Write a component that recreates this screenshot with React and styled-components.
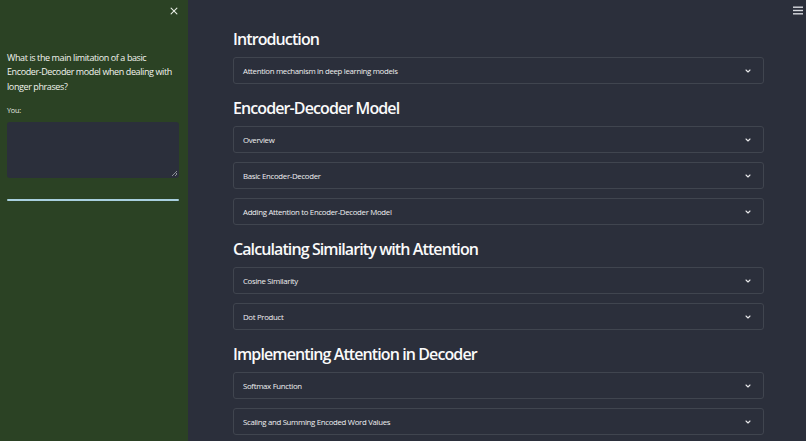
import React from 'react';
import styled, { createGlobalStyle } from 'styled-components';

const GlobalStyle = createGlobalStyle`
  html, body {
    margin: 0;
    padding: 0;
    background: #2b2f3b;
  }
  * {
    box-sizing: border-box;
  }
`;

const sections = [
  { title: 'Introduction', items: ['Attention mechanism in deep learning models'] },
  {
    title: 'Encoder-Decoder Model',
    items: ['Overview', 'Basic Encoder-Decoder', 'Adding Attention to Encoder-Decoder Model'],
  },
  { title: 'Calculating Similarity with Attention', items: ['Cosine Similarity', 'Dot Product'] },
  {
    title: 'Implementing Attention in Decoder',
    items: ['Softmax Function', 'Scaling and Summing Encoded Word Values'],
  },
];

const Chevron = () => (
  <svg width="8" height="8" viewBox="0 0 24 24" fill="none" stroke="#e8e8ea" strokeWidth="3.2" strokeLinecap="round" strokeLinejoin="round">
    <polyline points="6 9 12 15 18 9" />
  </svg>
);

const App = () => (
  <Page>
    <GlobalStyle />
    <Sidebar>
      <CloseBtn>
        <svg width="10" height="10" viewBox="0 0 24 24" fill="none" stroke="#e6ece2" strokeWidth="2.6" strokeLinecap="round">
          <line x1="5" y1="5" x2="19" y2="19" />
          <line x1="19" y1="5" x2="5" y2="19" />
        </svg>
      </CloseBtn>
      <Question>
        What is the main limitation of a basic Encoder-Decoder model when dealing with longer phrases?
      </Question>
      <Label>You:</Label>
      <TextArea />
      <Progress />
    </Sidebar>
    <Main>
      <MenuBtn>
        <svg width="10" height="9" viewBox="0 0 10 9" fill="#d8dadf">
          <rect x="0" y="0.5" width="10" height="1.4" />
          <rect x="0" y="3.8" width="10" height="1.4" />
          <rect x="0" y="7.1" width="10" height="1.4" />
        </svg>
      </MenuBtn>
      <Content>
        {sections.map((s) => (
          <Section key={s.title}>
            <Heading>{s.title}</Heading>
            {s.items.map((item) => (
              <Expander key={item}>
                <span>{item}</span>
                <Chevron />
              </Expander>
            ))}
          </Section>
        ))}
      </Content>
    </Main>
  </Page>
);

const Page = styled.div`
  display: flex;
  width: 806px;
  height: 441px;
  overflow: hidden;
  font-family: 'Open Sans', 'Noto Sans', sans-serif;
  color: #fafafa;
`;

const Sidebar = styled.aside`
  position: relative;
  width: 188px;
  flex-shrink: 0;
  background: #2b4224;
  padding: 51px 9px 0 7px;
  display: flex;
  flex-direction: column;
`;

const CloseBtn = styled.div`
  position: absolute;
  top: 6px;
  left: 169px;
  display: flex;
`;

const Question = styled.p`
  margin: 0;
  font-size: 9px;
  line-height: 14.4px;
  letter-spacing: -0.4px;
  color: #f2f4ef;
`;

const Label = styled.div`
  margin-top: 11px;
  font-size: 7.2px;
  letter-spacing: -0.2px;
  color: #e8ece4;
`;

const TextArea = styled.div`
  margin-top: 7px;
  height: 56px;
  background: #2b2f3b;
  border-radius: 3px;
  position: relative;

  &::after {
    content: '';
    position: absolute;
    right: 2px;
    bottom: 2px;
    width: 5px;
    height: 5px;
    background: linear-gradient(135deg, transparent 45%, #8a8e96 45%, #8a8e96 55%, transparent 55%, transparent 70%, #8a8e96 70%, #8a8e96 80%, transparent 80%);
  }
`;

const Progress = styled.div`
  margin-top: 21px;
  height: 2px;
  background: #a9d0df;
  border-radius: 1px;
`;

const Main = styled.main`
  position: relative;
  flex: 1;
  background: #2b2f3b;
`;

const MenuBtn = styled.div`
  position: absolute;
  top: 6px;
  right: 3px;
  display: flex;
`;

const Content = styled.div`
  width: 531px;
  margin-left: 45px;
  padding-top: 28px;
  display: flex;
  flex-direction: column;
`;

const Section = styled.section`
  display: flex;
  flex-direction: column;
  gap: 9px;
  margin-bottom: 13px;
`;

const Heading = styled.h2`
  margin: 0 0 -2px;
  font-size: 16px;
  font-weight: 600;
  line-height: 22px;
  letter-spacing: -0.9px;
  color: #fafafa;
`;

const Expander = styled.div`
  height: 27px;
  border: 1px solid #40454f;
  border-radius: 3px;
  display: flex;
  align-items: center;
  justify-content: space-between;
  padding: 0 11px 0 9px;
  font-size: 7.8px;
  letter-spacing: -0.3px;
  color: #f0f0f2;
`;

export default App;
